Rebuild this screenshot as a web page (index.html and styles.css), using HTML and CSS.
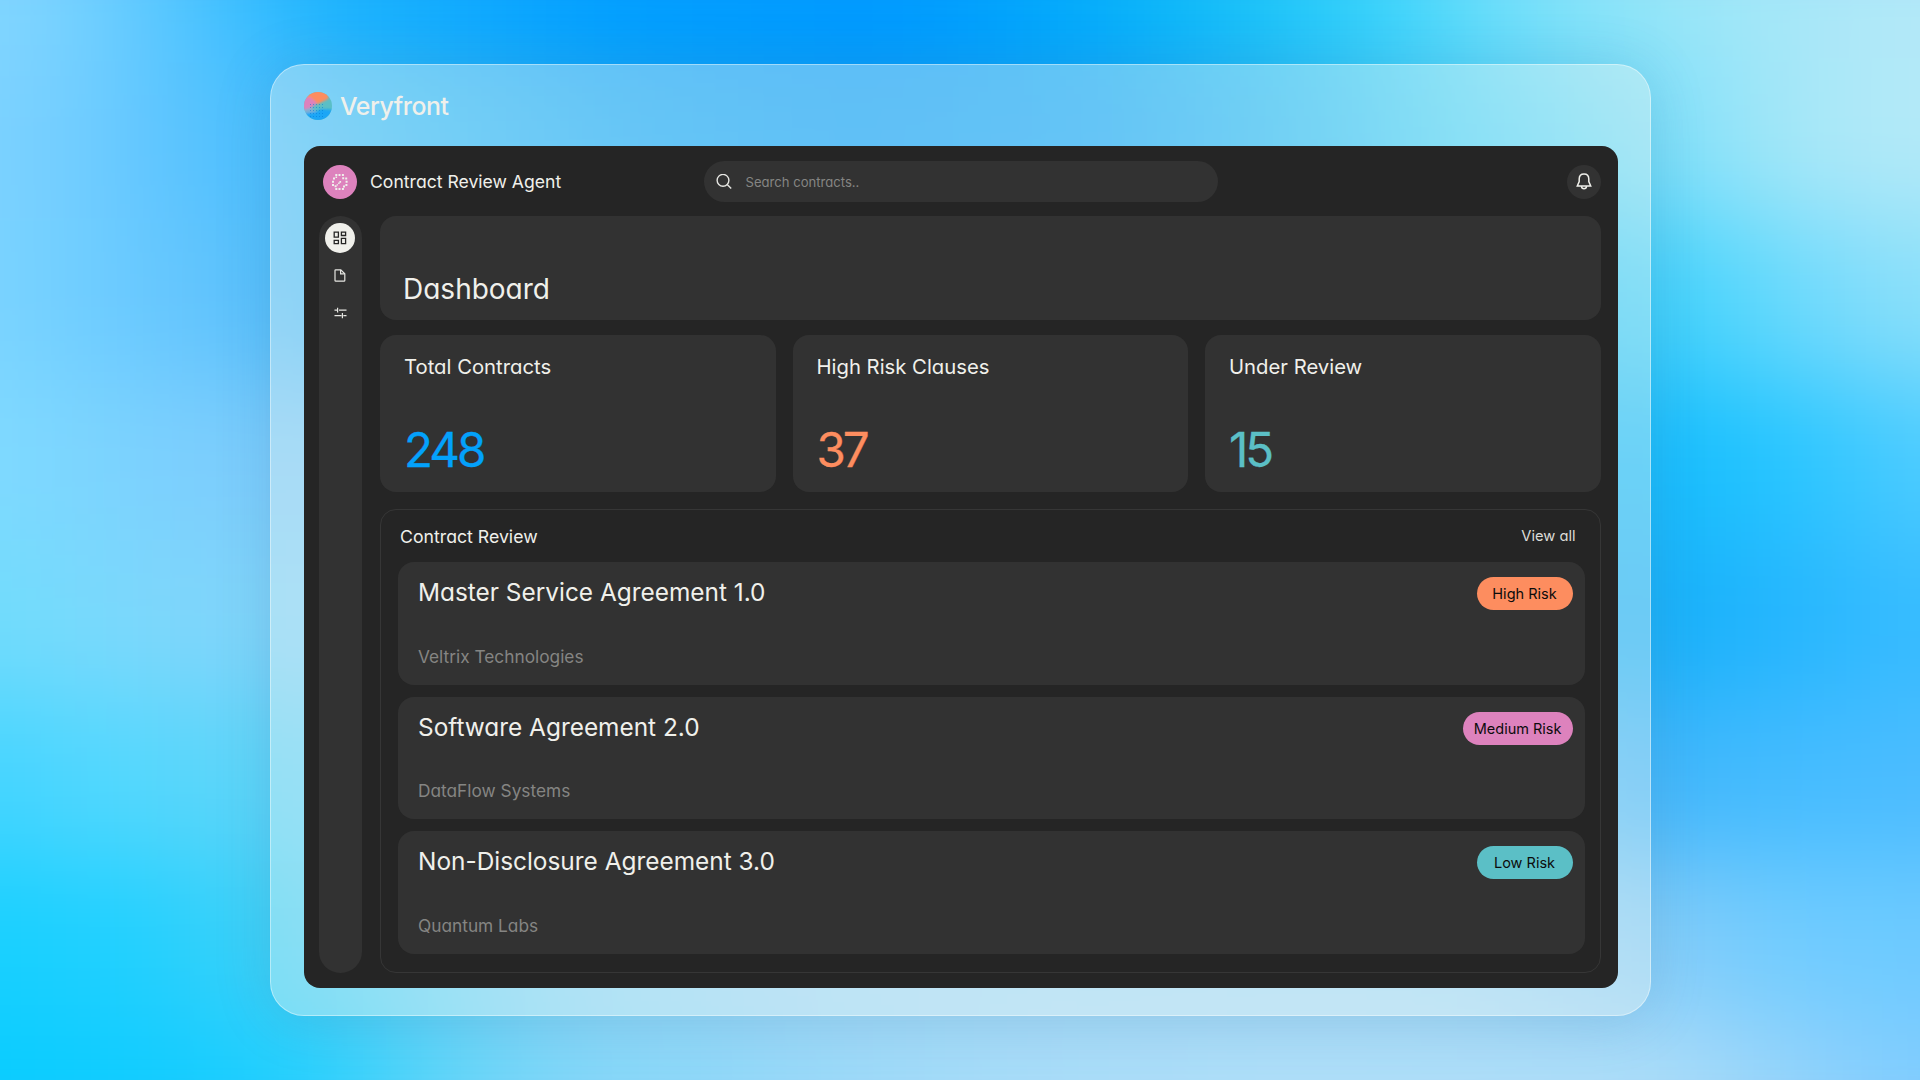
FILE: index.html
```
<!DOCTYPE html>
<html lang="en">

<head>
    <title>Veryfront - Contract Review Agent</title>
    <meta charset="UTF-8">
    <link rel="stylesheet" href="styles.css">
</head>

<body>
    <!-- soft colour background, one band per row -->
    <svg class="backdrop" viewBox="0 0 1920 1080" preserveAspectRatio="none">
        <foreignObject width="1920" height="1080">
            <div class="bands">
                <div class="band band-1"></div>
                <div class="band band-2"></div>
                <div class="band band-3"></div>
                <div class="band band-4"></div>
                <div class="band band-5"></div>
                <div class="band band-6"></div>
                <div class="band band-7"></div>
                <div class="band band-8"></div>
            </div>
        </foreignObject>
    </svg>

    <div class="frame">
        <div class="brand">
            <svg class="brand-logo" viewBox="0 0 28 28">
                <defs>
                    <clipPath id="disc"><circle cx="14" cy="14" r="14"/></clipPath>
                    <filter id="soft" x="-50%" y="-50%" width="200%" height="200%"><feGaussianBlur stdDeviation="1.3"/></filter>
                    <pattern id="dots" width="3" height="3" patternUnits="userSpaceOnUse"><rect width="1" height="1" fill="#0078d8"/></pattern>
                </defs>
                <g clip-path="url(#disc)">
                    <rect width="28" height="28" fill="#5bbfc6"/>
                    <g filter="url(#soft)">
                        <path d="M-4 -4H26L24 7L14 12L-4 14Z" fill="#fd8d5f"/>
                        <path d="M-4 6L6 5L13 11L7 16L-4 19Z" fill="#dd82bd"/>
                        <path d="M-4 19L7 16L14 20L-4 24Z" fill="#7fb0d4"/>
                        <path d="M-4 22L11 20L17 17L32 18V32H-4Z" fill="#1aa6f6"/>
                    </g>
                    <rect x="4" y="12" width="17" height="14" fill="url(#dots)" opacity=".55"/>
                </g>
            </svg>
            <span class="brand-name">Veryfront</span>
        </div>

        <div class="app">
            <header class="header">
                <div class="agent">
                    <span class="agent-avatar">
                        <svg width="16" height="16" viewBox="0 0 16 16" fill="#f0f0eb">
                            <path d="M3.3 0h2v2h-2zM6.5 0h2v2h-2zM9.9 0h2v2h-2zM1 3.5h2v2h-2zM3.5 2.5h1.6v1.6h-1.6zM10.2 3.2h2v2h-2zM13.2 3.6h2v2h-2zM0 6.8h2v2h-2zM13.6 6.8h2v2h-2zM0 10h2v2h-2zM13.4 10h2v2h-2zM2.6 11.2h2v2h-2zM11 11.6h2v2h-2zM3.3 14h2v2h-2zM6.5 14h2v2h-2zM9.9 14h2v2h-2z"/>
                            <path d="M7.4 7h1.7v1.7h-1.7zM6.2 8.6h1.4v1.4h-1.4zM4.6 10.2h1.4v1.4h-1.4z"/>
                        </svg>
                    </span>
                    <span class="agent-name">Contract Review Agent</span>
                </div>
                <div class="search">
                    <svg width="16" height="16" viewBox="0 0 16 16" fill="none" stroke="#e6e6e2" stroke-width="1.4">
                        <circle cx="7" cy="6.3" r="5.9"/>
                        <path d="M11.2 10.5L15.2 14.5"/>
                    </svg>
                    <span>Search contracts..</span>
                </div>
                <div class="bell">
                    <svg width="16" height="17" viewBox="0 0 16 17" fill="none" stroke="#f0f0eb" stroke-width="1.5">
                        <path d="M3.2 6C3.2 2.9 5.1 1 8 1S12.8 2.9 12.8 6V8.6L14.7 13H1.3L3.2 8.6Z"/>
                        <path d="M5.4 13.2C5.6 14.9 6.6 15.8 8 15.8S10.4 14.9 10.6 13.2"/>
                    </svg>
                </div>
            </header>

            <div class="content">
                <nav class="sidebar">
                    <a class="nav-item active">
                        <svg width="14" height="14" viewBox="0 0 14 14" fill="none" stroke="#252525" stroke-width="1.3">
                            <path d="M1.2 1.2h4.2v5h-4.2zM8.4 1.2h4.2v3.3h-4.2zM1.2 9.3h4.2v3.3h-4.2zM8.4 7.4h4.2v5.2h-4.2z"/>
                        </svg>
                    </a>
                    <a class="nav-item">
                        <svg width="12" height="13" viewBox="0 0 12 13" fill="none" stroke="#e6e6e2" stroke-width="1.2">
                            <path d="M1 1.5Q1 .8 1.7 .8H6.8L10.8 4.8V11.4Q10.8 12.2 10 12.2H1.8Q1 12.2 1 11.4Z"/>
                            <path d="M6.6 1V4.9H10.6"/>
                        </svg>
                    </a>
                    <a class="nav-item">
                        <svg width="13" height="12" viewBox="0 0 13 12" fill="none" stroke="#e6e6e2" stroke-width="1.2">
                            <path d="M.5 3.2H4M5 3.2H12.5M3.6 .8V5.6M.5 8.6H7.5M9.3 8.6H12.5M8.4 6V11.2"/>
                        </svg>
                    </a>
                </nav>

                <main class="main">
                    <section class="hero">
                        <h1>Dashboard</h1>
                    </section>

                    <section class="stats">
                        <div class="stat">
                            <h2>Total Contracts</h2>
                            <p class="number blue">248</p>
                        </div>
                        <div class="stat">
                            <h2>High Risk Clauses</h2>
                            <p class="number orange">37</p>
                        </div>
                        <div class="stat">
                            <h2>Under Review</h2>
                            <p class="number teal">15</p>
                        </div>
                    </section>

                    <section class="review">
                        <div class="review-head">
                            <h3>Contract Review</h3>
                            <a class="view-all">View all</a>
                        </div>
                        <div class="contract">
                            <div class="contract-text">
                                <h4>Master Service Agreement 1.0</h4>
                                <p>Veltrix Technologies</p>
                            </div>
                            <span class="badge high">High Risk</span>
                        </div>
                        <div class="contract">
                            <div class="contract-text">
                                <h4>Software Agreement 2.0</h4>
                                <p>DataFlow Systems</p>
                            </div>
                            <span class="badge medium">Medium Risk</span>
                        </div>
                        <div class="contract">
                            <div class="contract-text">
                                <h4>Non-Disclosure Agreement 3.0</h4>
                                <p>Quantum Labs</p>
                            </div>
                            <span class="badge low">Low Risk</span>
                        </div>
                    </section>
                </main>
            </div>
        </div>
    </div>
</body>

</html>
```

FILE: styles.css
```
* {
    margin: 0;
    padding: 0;
    box-sizing: border-box;
}

body {
    width: 1920px;
    height: 1080px;
    padding: 64px 269px 64px 270px;
    overflow: hidden;
    background: #40bcff;
    color: #f0f0eb;
    font-family: Inter, "Liberation Sans", sans-serif;
    font-feature-settings: "cv11";
}

h1,
h2,
h3,
h4 {
    font-weight: 400;
}

svg {
    display: block;
}

/* background */
.backdrop {
    position: absolute;
    inset: 0;
    z-index: -1;
    width: 1920px;
    height: 1080px;
    overflow: hidden;
}

.backdrop foreignObject {
    overflow: visible;
}

.bands {
    display: flex;
    flex-direction: column;
    width: 2220px;
    height: 1280px;
    margin: -100px -150px;
    filter: blur(50px);
}

.band {
    flex: 1;
}

.band-1 {
    background: linear-gradient(90deg, #84d6ff 150px, #78d2ff 220px, #5cc8ff 300px, #40c0ff 380px, #1cb4fe 460px, #009dff 750px, #0098ff 1050px, #00a8fc 1200px, #10bcf8 1350px, #38d4fb 1530px, #74dffa 1650px, #98e6f8 1800px, #b4e8f8 2070px);
}

.band-2 {
    background: linear-gradient(90deg, #7cd2ff 150px, #74ceff 220px, #60c6ff 300px, #4cbefd 410px, #30bcfa 550px, #10a8fa 800px, #08a0fa 1000px, #10a6fa 1250px, #28bcf6 1450px, #48d4fa 1600px, #84e0f9 1830px, #a8e8f8 1950px, #b4e9f8 2070px);
}

.band-3 {
    background: linear-gradient(90deg, #7cd4ff 150px, #70ceff 220px, #68c8ff 300px, #5cc0fb 400px, #30b8fa 600px, #10a4fa 1000px, #24bcfa 1450px, #40d0fa 1810px, #58d8fd 1890px, #78dafc 1980px, #8ce0f9 2070px);
}

.band-4 {
    background: linear-gradient(90deg, #80daff 150px, #7cd6fe 220px, #7cd0ff 300px, #7cccfb 400px, #80ccfb 600px, #20b8fa 1600px, #18bcfc 1810px, #20c4ff 1900px, #38c8ff 2000px, #50ccff 2070px);
}

.band-5 {
    background: linear-gradient(90deg, #70dcfc 150px, #7cd8fc 270px, #80d4fa 400px, #88d4f8 600px, #24b4f8 1600px, #18b0f8 1810px, #20b4fe 1900px, #38bcff 2070px);
}

.band-6 {
    background: linear-gradient(90deg, #44d4ff 150px, #54d8fe 270px, #5cd4f8 400px, #70d4f8 600px, #54bcfa 1700px, #40b6fa 1810px, #44bcff 1930px, #4cbcff 2070px);
}

.band-7 {
    background: linear-gradient(90deg, #18d0ff 150px, #24d0ff 300px, #3cd0f6 410px, #60d4f8 550px, #90d8f8 750px, #a4daf8 1000px, #a0daf8 1600px, #84ccf8 1810px, #70ccff 1930px, #6ccaff 2070px);
}

.band-8 {
    background: linear-gradient(90deg, #08ccff 150px, #14ccff 350px, #28d0fe 480px, #58d4f8 570px, #80d6f8 700px, #98d8f8 950px, #a8dcf8 1150px, #b0def8 1400px, #b0def8 1810px, #98d4fa 1930px, #80ccff 2070px);
}

/* glass frame */
.frame {
    height: 952px;
    padding: 27px 32px 27px 33px;
    border: 1px solid rgba(255, 255, 255, 0.42);
    border-radius: 34px;
    background: rgba(240, 244, 240, 0.38);
    box-shadow: 0 4px 56px rgba(50, 110, 160, 0.2);
}

.brand {
    display: flex;
    align-items: center;
    gap: 8px;
    height: 28px;
    margin-bottom: 26px;
}

.brand-logo {
    width: 28px;
    height: 28px;
}

.brand-name {
    font-size: 24.8px;
    font-weight: 500;
    letter-spacing: -0.4px;
}

.app {
    height: 842px;
    border-radius: 16px;
    background: #252525;
}

/* header */
.header {
    display: grid;
    grid-template-columns: 1fr 514px 1fr;
    align-items: center;
    height: 70px;
    padding: 1px 17px 0 18px;
}

.agent {
    display: flex;
    align-items: center;
    gap: 13px;
    padding-left: 1px;
    font-size: 17.6px;
}

.agent-avatar {
    display: flex;
    align-items: center;
    justify-content: center;
    width: 34px;
    height: 34px;
    border-radius: 50%;
    background: #dd82bd;
}

.search {
    display: flex;
    align-items: center;
    gap: 14px;
    height: 41px;
    margin: 0 1px 0 -1px;
    padding-left: 12px;
    border-radius: 21px;
    background: #323232;
    color: #858583;
    font-size: 13.1px;
}

.bell {
    display: flex;
    align-items: center;
    justify-content: center;
    justify-self: end;
    width: 34px;
    height: 34px;
    border-radius: 50%;
    background: #323232;
}

.content {
    display: flex;
    gap: 18.5px;
    height: 757px;
    padding: 0 17.5px 0 15px;
}

/* sidebar */
.sidebar {
    display: flex;
    flex-direction: column;
    align-items: center;
    gap: 7.5px;
    width: 42.5px;
    padding-top: 7px;
    border-radius: 21.5px;
    background: #323232;
}

.nav-item {
    display: flex;
    align-items: center;
    justify-content: center;
    width: 30px;
    height: 30px;
    border-radius: 50%;
}

.active {
    background: #f0f0eb;
}

/* main column */
.main {
    flex: 1;
    display: flex;
    flex-direction: column;
}

.hero {
    display: flex;
    align-items: flex-end;
    height: 104px;
    padding: 0 23px 14px;
    border-radius: 16px;
    background: #323232;
}

.hero h1 {
    font-size: 28px;
    line-height: 34px;
}

.stats {
    display: grid;
    grid-template-columns: repeat(3, 1fr);
    gap: 17px;
    height: 157px;
    margin: 15px 0 17px;
}

.stat {
    display: flex;
    flex-direction: column;
    justify-content: space-between;
    padding: 19px 24px 14px;
    border-radius: 16px;
    background: #323232;
}

.stat h2 {
    font-size: 20.3px;
    line-height: 25px;
}

.number {
    font-size: 47.5px;
    line-height: 56px;
    letter-spacing: -3px;
    -webkit-text-stroke: 0.3px currentColor;
}

.blue {
    color: #03a1fb;
}

.orange {
    color: #fd8d5f;
}

.teal {
    color: #5bbfc6;
}

/* contract list */
.review {
    flex: 1;
    display: flex;
    flex-direction: column;
    gap: 12px;
    padding: 13px 15px 18px 17px;
    border: 1px solid #363636;
    border-radius: 16px;
}

.review-head {
    display: flex;
    justify-content: space-between;
    align-items: center;
    height: 26px;
    margin-bottom: 1px;
    padding: 0 9px 0 2px;
}

.review-head h3 {
    font-size: 17.7px;
}

.view-all {
    color: #dcdcd8;
    font-size: 14.7px;
}

.contract {
    flex: 1;
    display: flex;
    justify-content: space-between;
    align-items: flex-start;
    padding: 15px 12px 17px 20px;
    border-radius: 16px;
    background: #323232;
}

.contract-text {
    display: flex;
    flex-direction: column;
    justify-content: space-between;
    height: 100%;
}

.contract h4 {
    font-size: 24.4px;
    line-height: 30px;
}

.contract p {
    color: #858583;
    font-size: 17.3px;
    line-height: 22px;
}

.badge {
    min-width: 96px;
    padding: 0 11px;
    border-radius: 17px;
    color: #0c0c0c;
    font-size: 14.5px;
    line-height: 33px;
    text-align: center;
}

.high {
    background: #fd8d5f;
}

.medium {
    background: #dd82bd;
}

.low {
    background: #5bbfc6;
}
```
